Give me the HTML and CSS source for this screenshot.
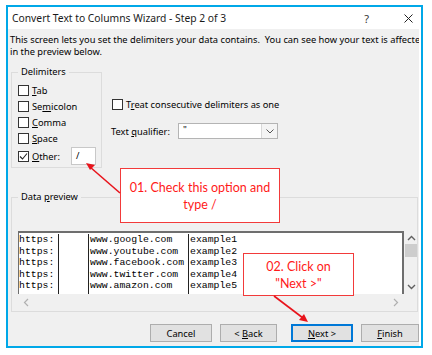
FILE: index.html
```html
<!DOCTYPE html>
<html>
<head>
<meta charset="utf-8">
<link rel="stylesheet" href="styles.css">
</head>
<body>
<div class="frame">
  <div class="titlebar">
    <span class="title">Convert Text to Columns Wizard - Step 2 of 3</span>
    <span class="help">?</span>
    <svg class="close" width="9" height="9" viewBox="0 0 9 9"><path d="M0.5 0.5 L8.5 8.5 M8.5 0.5 L0.5 8.5" stroke="#222" stroke-width="1"/></svg>
  </div>
  <div class="content">
    <div class="desc">
      <div>This screen lets you set the delimiters your data contains.&nbsp; You can see how your text is affected</div>
      <div>in the preview below.</div>
    </div>
    <div class="toprow">
      <fieldset class="group delims">
        <legend>Delimiters</legend>
        <div class="crow"><span class="cb"></span><span><u>T</u>ab</span></div>
        <div class="crow"><span class="cb"></span><span>Se<u>m</u>icolon</span></div>
        <div class="crow"><span class="cb"></span><span><u>C</u>omma</span></div>
        <div class="crow"><span class="cb"></span><span><u>S</u>pace</span></div>
        <div class="crow other"><span class="cb"><svg width="9" height="9" viewBox="0 0 9 9"><path d="M1 4.5 L3.5 7 L8 1.5" fill="none" stroke="#222" stroke-width="1.1"/></svg></span><span><u>O</u>ther:</span><span class="tbox">/</span></div>
      </fieldset>
      <div class="options">
        <div class="crow treat"><span class="cb"></span><span>T<u>r</u>eat consecutive delimiters as one</span></div>
        <div class="qrow">
          <span class="qlabel">Text <u>q</u>ualifier:</span>
          <span class="combo"><span class="cval">"</span><span class="carrow"><svg width="8" height="5" viewBox="0 0 8 5"><path d="M0.5 0.5 L4 4 L7.5 0.5" fill="none" stroke="#555" stroke-width="1"/></svg></span></span>
        </div>
      </div>
    </div>
    <fieldset class="group preview">
      <legend>Data <u>p</u>review</legend>
      <div class="pwrap">
        <div class="pbox">
          <div class="pcol c1"><div>https:</div><div>https:</div><div>https:</div><div>https:</div><div>https:</div></div>
          <div class="pcol c2"></div>
          <div class="pcol c3"><div>www.google.com</div><div>www.youtube.com</div><div>www.facebook.com</div><div>www.twitter.com</div><div>www.amazon.com</div></div>
          <div class="pcol c4"><div>example1</div><div>example2</div><div>example3</div><div>example4</div><div>example5</div></div>
        </div>
        <div class="vscroll">
          <svg width="9" height="6" viewBox="0 0 9 6"><path d="M1 5 L4.5 1.5 L8 5" fill="none" stroke="#606060" stroke-width="1.4"/></svg>
          <span class="thumb"></span>
          <span class="vfill"></span>
          <svg width="9" height="6" viewBox="0 0 9 6"><path d="M1 1 L4.5 4.5 L8 1" fill="none" stroke="#606060" stroke-width="1.4"/></svg>
        </div>
      </div>
      <div class="hscroll">
        <svg width="6" height="9" viewBox="0 0 6 9"><path d="M5 1 L1.5 4.5 L5 8" fill="none" stroke="#b0b0b0" stroke-width="1.2"/></svg>
        <svg width="6" height="9" viewBox="0 0 6 9"><path d="M1 1 L4.5 4.5 L1 8" fill="none" stroke="#b0b0b0" stroke-width="1.2"/></svg>
      </div>
    </fieldset>
    <div class="buttons">
      <span class="btn cancel"><span>Cancel</span></span>
      <span class="btn back"><span>&lt; <u>B</u>ack</span></span>
      <span class="btn next"><span><u>N</u>ext &gt;</span></span>
      <span class="btn finish"><span><u>F</u>inish</span></span>
    </div>
  </div>
</div>

<div class="callout callout1">01. Check this option and<br>type /</div>
<div class="callout callout2">02. Click on<br>"Next &gt;"</div>
<svg class="arrows" width="432" height="355" viewBox="0 0 432 355">
  <line x1="120" y1="193" x2="90" y2="167" stroke="#e8141c" stroke-width="1.6"/>
  <path d="M86 163 L95 165 L90 170 Z" fill="#e8141c"/>
  <line x1="274" y1="296" x2="303" y2="318" stroke="#e8141c" stroke-width="1.6"/>
  <path d="M308 322 L299 320 L304 314 Z" fill="#e8141c"/>
</svg>
</body>
</html>
```

FILE: styles.css
```css
html, body {
  margin: 0;
  padding: 0;
  background: #ffffff;
}
body {
  position: relative;
  width: 432px;
  height: 355px;
  overflow: hidden;
  font-family: "Noto Sans", "Open Sans", sans-serif;
  font-size: 9.3px;
  color: #000;
}
.frame {
  margin: 5px 0 0 6px;
  width: 413px;
  height: 339px;
  border: 2px solid #00a8e8;
  background: #ffffff;
  display: flex;
  flex-direction: column;
}
.titlebar {
  height: 22px;
  flex: none;
  display: flex;
  align-items: center;
  padding-left: 4px;
}
.title {
  font-size: 10.3px;
  color: #1a1a1a;
  flex: 1;
}
.help {
  font-size: 11px;
  color: #333;
  margin-right: 35px;
}
.close {
  margin-right: 8px;
}
.content {
  flex: 1;
  background: #f0f0f0;
  margin-right: 2px;
  display: flex;
  flex-direction: column;
  overflow: hidden;
}
.desc {
  padding: 5px 0 0 2px;
  line-height: 12px;
  white-space: nowrap;
  overflow: hidden;
}
.toprow {
  display: flex;
  align-items: flex-start;
  margin-top: 8px;
  padding-left: 3px;
  gap: 9px;
}
.group {
  margin: 0;
  padding: 0;
  border: 1px solid #dcdcdc;
  min-width: 0;
}
.group legend {
  padding: 0 3px;
  margin-left: 0;
  line-height: 12px;
}
.delims {
  padding: 4px 5px 1px 6px;
  box-sizing: border-box;
  width: 91px;
}
.crow {
  display: flex;
  align-items: center;
  height: 16px;
  gap: 3px;
}
.crow.other {
  height: 20px;
}
.cb {
  width: 11px;
  height: 11px;
  box-sizing: border-box;
  border: 1px solid #333;
  background: #fff;
  flex: none;
  display: flex;
  align-items: center;
  justify-content: center;
}
.tbox {
  margin-left: auto;
  width: 25px;
  height: 18px;
  box-sizing: border-box;
  border: 1px solid #c8c8c8;
  background: #fff;
  padding-left: 4px;
  line-height: 16px;
}
.options {
  display: flex;
  flex-direction: column;
  padding-top: 30px;
  padding-left: 1px;
}
.qrow {
  display: flex;
  align-items: center;
  height: 16px;
  margin-top: 11px;
  margin-left: -1px;
}
.qlabel {
  width: 67px;
}
.combo {
  width: 100px;
  height: 16px;
  box-sizing: border-box;
  border: 1px solid #b4b4b4;
  background: #fff;
  display: flex;
}
.cval {
  flex: 1;
  padding-left: 4px;
  line-height: 12px;
}
.carrow {
  width: 15px;
  border-left: 1px solid #d8d8d8;
  background: #f4f4f4;
  display: flex;
  align-items: center;
  justify-content: center;
}
.preview {
  margin: 23px 0 0 3px;
  width: 407px;
  box-sizing: border-box;
  padding: 28px 0 2px 6px;
}
.pwrap {
  display: flex;
  gap: 1px;
}
.pbox {
  width: 386px;
  height: 63px;
  box-sizing: border-box;
  background: #fff;
  border: 2px solid #6e6e6e;
  border-left-width: 1px;
  border-bottom: none;
  display: flex;
  padding-top: 1px;
  font-family: "Liberation Mono", monospace;
  font-size: 9.8px;
  line-height: 11.5px;
  overflow: hidden;
}
.pcol {
  box-sizing: border-box;
  border-right: 1px solid #222;
  white-space: nowrap;
  flex: none;
}
.pcol.c1 { width: 40px; }
.pcol.c2 { width: 30px; }
.pcol.c3 { width: 100px; padding-left: 1px; }
.pcol.c4 { border-right: none; flex: 1; padding-left: 1px; }
.vscroll {
  width: 12px;
  height: 64px;
  display: flex;
  flex-direction: column;
  align-items: center;
  padding-top: 4px;
  box-sizing: border-box;
}
.thumb {
  display: block;
  width: 12px;
  height: 13px;
  background: #cdcdcd;
  margin-top: 3px;
}
.vfill {
  flex: 1;
}
.vscroll svg:last-child {
  margin-bottom: 5px;
}
.hscroll {
  height: 14px;
  display: flex;
  align-items: center;
  justify-content: space-between;
  padding: 0 18px 0 5px;
}
.buttons {
  display: flex;
  margin-top: 12px;
  padding-left: 142px;
}
.btn {
  height: 18px;
  box-sizing: border-box;
  border: 1px solid #adadad;
  background: #e1e1e1;
  display: flex;
  align-items: center;
  justify-content: center;
}
.cancel { width: 62px; margin-right: 8px; }
.back { width: 57px; margin-right: 14px; }
.next { width: 62px; margin-right: 8px; border: 2px solid #0078d7; }
.finish { width: 58px; }
.callout {
  position: absolute;
  box-sizing: border-box;
  background: #fff;
  border: 1.5px solid #f23a3a;
  color: #ff1a1a;
  font-family: "Lato", "Open Sans", sans-serif;
  font-size: 12.5px;
  line-height: 17px;
  text-align: center;
  display: flex;
  align-items: center;
  justify-content: center;
}
.callout1 {
  left: 120px;
  top: 168px;
  width: 160px;
  height: 55px;
}
.callout2 {
  left: 243px;
  top: 253px;
  width: 111px;
  height: 43px;
}
.arrows {
  position: absolute;
  left: 0;
  top: 0;
}
```
